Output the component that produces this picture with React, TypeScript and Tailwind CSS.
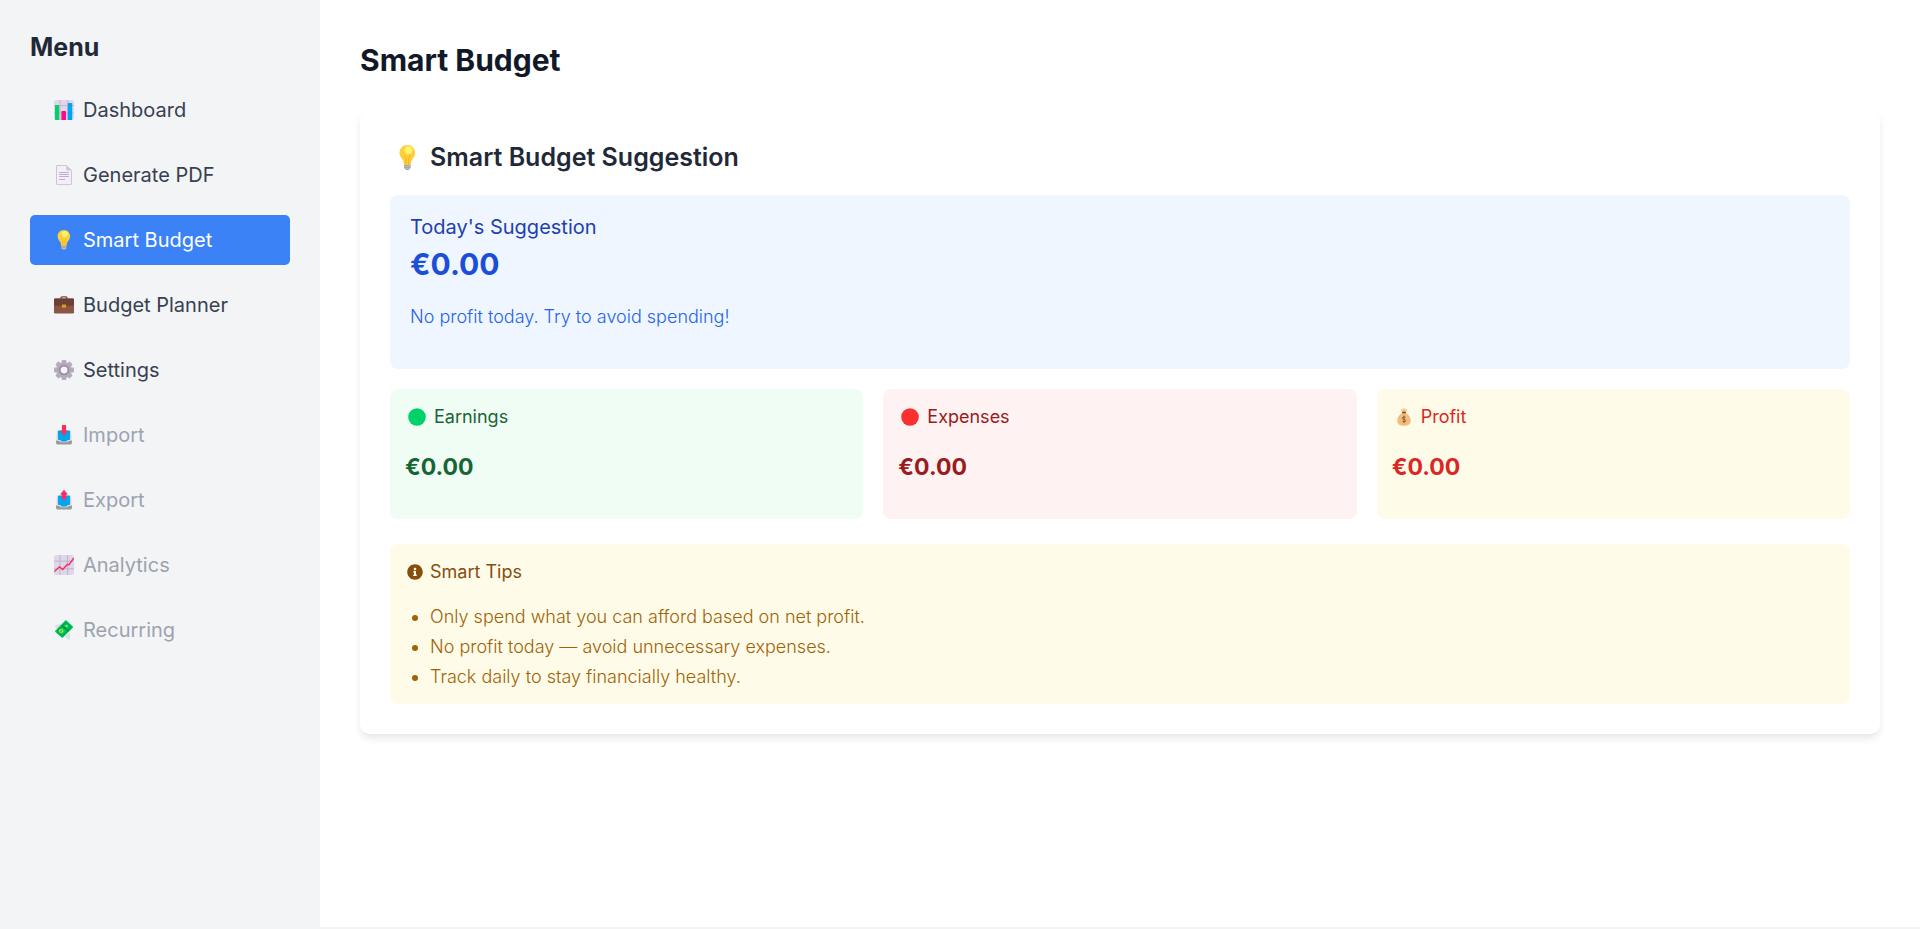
import type { ReactNode } from 'react';
import { FaInfoCircle } from 'react-icons/fa';

type IconProps = { className?: string };

function Svg({ className = 'size-5', children }: IconProps & { children: ReactNode }) {
  return (
    <svg viewBox="0 0 20 20" className={`${className} shrink-0`} aria-hidden="true">
      {children}
    </svg>
  );
}

function ChartBars() {
  return (
    <Svg>
      <rect width="20" height="20" rx="2.5" fill="#e0d6ea" />
      <path d="M6 0v20M13.7 0v20M0 5.6h20M0 13h20" stroke="#c3b6cc" strokeWidth="1" />
      <path d="M1 5.8q0-.8.8-.8h2.6q.8 0 .8.8V20H1z" fill="#00d26a" />
      <path d="M7.4 11.8q0-.8.8-.8h3q.8 0 .8.8V20H7.4z" fill="#fc0a8b" />
      <path d="M13.8 3.8q0-.8.8-.8h2.8q.8 0 .8.8V20h-4.4z" fill="#00a6ed" />
    </Svg>
  );
}

function Page() {
  return (
    <Svg>
      <path d="M3 .5h9.3L17.5 5.600V19a.6.6 0 0 1-.6.6H3.100a.6.6 0 0 1-.6-.6V1q0-.5.5-.5z" fill="#f3eef8" stroke="#cdc4d6" />
      <path d="M12.300.3v3.900q0 1.300 1.300 1.300h4.200z" fill="#cdc4d6" />
      <path d="M5.200 7.500h9.600M5.200 9.500h9.600M5.200 11.500h9.600M5.200 14.500h5.800" stroke="#b3a6bf" strokeWidth="0.9" />
    </Svg>
  );
}

function Bulb({ className }: IconProps) {
  return (
    <Svg className={className}>
      <path d="M7.200 15.500h5.300v2.200c0 .8-.5 1.200-1 1.400-.2.700-.8.900-1.600.9s-1.400-.2-1.600-.9c-.6-.2-1.100-.6-1.100-1.400z" fill="#9b9b9b" />
      <path d="M7.200 17h5.300M7.500 18.600h4.700" stroke="#d3d3d3" strokeWidth="0.6" />
      <path d="M9.850 0C6.300 0 3.600 2.800 3.600 6.200c0 2.500 1.300 4 2.300 5.300.8 1.100 1 2.200 1.100 3.400.1.600.4 1 1 1h3.700c.6 0 .9-.4 1-1 .1-1.200.3-2.300 1.100-3.400 1-1.300 2.300-2.800 2.300-5.300C16.100 2.800 13.400 0 9.850 0z" fill="#fdcf3a" />
      <path d="M7.300 8.200l1.400 2.500v5M12.400 8.200L11 10.700v5" fill="none" stroke="#f5a623" strokeWidth="0.6" />
      <circle cx="10.800" cy="4.100" r="3.100" fill="#fff26b" />
    </Svg>
  );
}

function Briefcase() {
  return (
    <Svg>
      <path d="M7 4V3q0-1.200 1.200-1.200h3.600Q13 1.800 13 3v1" fill="none" stroke="#7d4533" strokeWidth="1.300" />
      <rect y="3.600" width="20" height="14.800" rx="1.200" fill="#8c5543" />
      <path d="M0 4.800Q0 3.600 1.200 3.600h17.600q1.200 0 1.200 1.200v4.700q0 1.300-1.300 1.300H1.300Q0 10.800 0 9.500z" fill="#6d4034" />
      <rect x="7.900" y="9.400" width="4.200" height="3.200" rx=".7" fill="#f3a22c" />
      <path d="M8.500 10.800h3" stroke="#c56a18" strokeWidth=".7" />
    </Svg>
  );
}

const TEETH = [0, 45, 90, 135, 180, 225, 270, 315];

function Gear() {
  return (
    <Svg>
      {TEETH.map((angle) => (
        <rect key={angle} x="7.600" y="0" width="4.800" height="5" rx="1.100" fill="#b4acbc" transform={`rotate(${angle} 10 10)`} />
      ))}
      <circle cx="10" cy="10" r="5.700" fill="none" stroke="#b4acbc" strokeWidth="4.200" />
      <circle cx="10" cy="10" r="4.500" fill="none" stroke="#998ea4" strokeWidth="1.700" />
    </Svg>
  );
}

function Tray({ children }: { children: ReactNode }) {
  return (
    <Svg>
      <path d="M2.800 5.600h14.400L18 15v2.600q0 1.600-1.600 1.600H3.600Q2 19.200 2 17.600V15z" fill="#e3e3e3" />
      <path d="M2 15.600l3.600.3 1.200 1.300h6.400l1.200-1.300 3.600-.3v2.200q0 1.700-1.700 1.700H3.700Q2 19.500 2 17.800z" fill="#9b9b9b" />
      <path d="M3.900 6.600q0-1 1-1h10.200q1 0 1 1v7.300q0 1-1 1h-1.400l-1.100 1.500H7.400l-1.100-1.500H4.900q-1 0-1-1z" fill="#00a6ed" />
      {children}
    </Svg>
  );
}

function ImportTray() {
  return (
    <Tray>
      <path d="M7.900.6q0-.6.600-.6h3q.6 0 .6.600v5.200h1q.9.200.3 1L10 10.600 6.600 6.800q-.6-.8.300-1h1z" fill="#f92f60" />
    </Tray>
  );
}

function ExportTray() {
  return (
    <Tray>
      <path d="M10-.2l3.400 4q.6.800-.3 1h-1V9q0 .6-.6.600h-3q-.6 0-.6-.6V4.800h-1q-.9-.2-.3-1z" fill="#f92f60" />
    </Tray>
  );
}

function ChartLine() {
  return (
    <Svg>
      <rect width="20" height="20" rx="2.500" fill="#e0d6ea" />
      <path d="M5.900 0v20M13.600 0v20M0 6.200h20M0 13.800h20" stroke="#bfb2ca" strokeWidth="1" />
      <path d="M.3 16.600l5.200-4.800 3.200 2.700 4.700-5.200 1.500.6 4.900-6.900" fill="none" stroke="#fa2c5a" strokeWidth="1.400" strokeLinejoin="round" />
    </Svg>
  );
}

function FlyingMoney() {
  return (
    <Svg>
      <path d="M1 5.500l6-2-2 6-3-1zM11 17l5-5-.2 8-3.600-2z" fill="#dcdfe1" />
      <path d="M11.200.6q.7-.6 1.300 0l6.300 6q.6.600 0 1.200L9 17.600q-.7.600-1.300 0L1.300 12q-.6-.6 0-1.200z" fill="#00c661" />
      <path d="M11.900 2.300l5.100 4.900-8.700 8.700-5.200-4.600z" fill="none" stroke="#008b44" strokeWidth=".8" />
      <ellipse cx="7.200" cy="11" rx="2.400" ry="1.900" fill="#a5e838" />
      <path d="M6.200 11.700l1.900-1.400" stroke="#008b44" strokeWidth=".8" />
      <path d="M8 5.200l6.400 6" stroke="#008b44" strokeWidth="1.500" />
      <ellipse cx="12.600" cy="6" rx="1.300" ry="1" fill="#a5e838" />
    </Svg>
  );
}

function Dot({ color }: { color: string }) {
  return (
    <Svg className="size-[18px]">
      <circle cx="10" cy="10" r="9.800" fill={color} />
    </Svg>
  );
}

function MoneyBag() {
  return (
    <Svg className="size-[18px]">
      <path d="M6.800 1.500q1.700.7 2.200-.8.900-1.200 1.900 0 .6 1.500 2.300.8.800.3.300 1.100L11.900 5H8.100L6.500 2.600q-.5-.8.300-1.100z" fill="#f9c47c" />
      <path d="M7.700 5.600h4.600c2.900 1.700 5.200 5 5.200 8.400 0 4-2.500 5.800-7.500 5.800S2.500 18 2.500 14c0-3.400 2.300-6.700 5.200-8.400z" fill="#f3bd79" />
      <rect x="7.900" y="4.200" width="4.200" height="1.700" rx=".6" fill="#6d4034" />
      <path d="M11.700 10.700c-.4-.8-1-.9-1.700-.9-1.100 0-1.700.6-1.700 1.300 0 1.900 3.500 1 3.500 2.900 0 .8-.7 1.400-1.800 1.400-.8 0-1.500-.3-1.800-1.100M10 8.400v8.400" fill="none" stroke="#7a4a34" strokeWidth=".9" />
    </Svg>
  );
}

const MENU = [
  { label: 'Dashboard', icon: <ChartBars /> },
  { label: 'Generate PDF', icon: <Page /> },
  { label: 'Smart Budget', icon: <Bulb />, active: true },
  { label: 'Budget Planner', icon: <Briefcase /> },
  { label: 'Settings', icon: <Gear /> },
  { label: 'Import', icon: <ImportTray />, disabled: true },
  { label: 'Export', icon: <ExportTray />, disabled: true },
  { label: 'Analytics', icon: <ChartLine />, disabled: true },
  { label: 'Recurring', icon: <FlyingMoney />, disabled: true },
];

function Sidebar() {
  return (
    <aside className="w-80 shrink-0 bg-[#f3f4f6] p-[30px]">
      <h2 className="mb-5 text-[25px] leading-[35px] font-bold text-[#1f2937]">Menu</h2>
      <nav className="flex flex-col gap-[15px]">
        {MENU.map(({ label, icon, active, disabled }) => (
          <button
            key={label}
            type="button"
            disabled={disabled}
            aria-current={active ? 'page' : undefined}
            className={`flex h-[50px] w-full items-center gap-[9px] rounded-[5px] px-6 text-left text-xl ${
              active ? 'bg-[#3b82f6] text-white' : disabled ? 'text-[#9ca3af]' : 'text-[#374151]'
            }`}
          >
            {icon}
            {label}
          </button>
        ))}
      </nav>
    </aside>
  );
}

const STATS = [
  { label: 'Earnings', icon: <Dot color="#00d26a" />, box: 'bg-[#f0fdf4]', text: 'text-[#166534]' },
  { label: 'Expenses', icon: <Dot color="#f8312f" />, box: 'bg-[#fef2f2]', text: 'text-[#991b1b]' },
  { label: 'Profit', icon: <MoneyBag />, box: 'bg-[#fefce8]', text: 'text-[#dc2626]' },
];

const TIPS = [
  'Only spend what you can afford based on net profit.',
  'No profit today — avoid unnecessary expenses.',
  'Track daily to stay financially healthy.',
];

export default function App() {
  return (
    <div className="flex min-h-screen bg-white font-['Inter','Liberation_Sans',sans-serif]">
      <Sidebar />
      <main className="min-w-0 flex-1 border-b-2 border-[#f3f3f3] p-10">
        <h1 className="mb-[30px] text-[30px] leading-10 font-bold text-[#111827]">Smart Budget</h1>
        <section className="rounded-[10px] bg-white p-[30px] shadow-[0_5px_8px_-1px_rgba(0,0,0,0.1)]">
          <h2 className="mb-5 flex items-center gap-2.5 pl-[5px] text-[25px] leading-[35px] font-semibold text-[#1f2937]">
            <Bulb className="size-[25px]" />
            Smart Budget Suggestion
          </h2>

          <div className="mb-5 rounded-lg bg-[#eff6ff] px-5 pt-5 pb-10">
            <p className="mb-[5px] text-xl leading-[25px] text-[#1e40af]">Today's Suggestion</p>
            <p className="mb-[22px] text-[30px] leading-[38px] font-bold text-[#1d4ed8]">€0.00</p>
            <p className="text-[18px] leading-6 font-light text-[#2563eb]">No profit today. Try to avoid spending!</p>
          </div>

          <div className="mb-[25px] grid grid-cols-3 gap-5">
            {STATS.map(({ label, icon, box, text }) => (
              <div key={label} className={`rounded-lg px-[15px] pt-[15px] pb-[34px] ${box}`}>
                <h3 className={`mb-[21px] flex items-center gap-2 pl-[3px] text-[18px] leading-[25px] ${text}`}>
                  {icon}
                  {label}
                </h3>
                <p className={`text-[23px] leading-[35px] font-bold ${text}`}>€0.00</p>
              </div>
            ))}
          </div>

          <div className="rounded-lg bg-[#fefce8] p-[15px]">
            <h3 className="mb-5 flex items-center gap-[7px] pl-0.5 text-[18px] leading-[25px] text-[#854d0e]">
              <FaInfoCircle className="size-4" />
              Smart Tips
            </h3>
            <ul className="flex list-disc flex-col gap-[5px] pl-[25px] text-[18px] leading-[25px] font-light text-[#a16207]">
              {TIPS.map((tip) => (
                <li key={tip}>{tip}</li>
              ))}
            </ul>
          </div>
        </section>
      </main>
    </div>
  );
}
